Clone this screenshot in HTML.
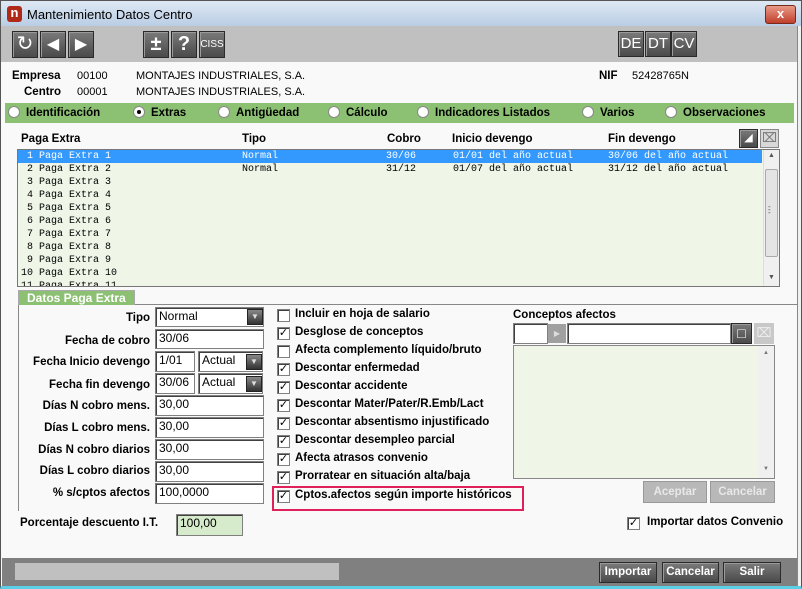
<!DOCTYPE html>
<html><head><meta charset="utf-8"><style>
*{margin:0;padding:0;box-sizing:border-box}
body{width:802px;height:589px;overflow:hidden;background:#f9f9f9;font-family:"Liberation Sans",sans-serif;font-size:12px;color:#000;position:relative}
.a{position:absolute}
.b{font-weight:bold;font-size:11.5px}
.btn{position:absolute;background:linear-gradient(#7a7a7a,#4a4a4a);border:1px solid #2a2a2a;box-shadow:inset 1px 1px 0 #9a9a9a;color:#fff;text-align:center}
.in{position:absolute;background:#fff;border:1px solid #808080;box-shadow:inset 1px 1px 0 #404040;font-size:12px;padding:1px 0 0 3px}
.lb{position:absolute;font-weight:bold;font-size:11.5px;text-align:right;width:150px;left:0}
.cb{position:absolute;width:13px;height:13px;border:1px solid #808080;background:#fff;box-shadow:inset 1px 1px 0 #404040;font-size:11px;line-height:11px;text-align:center}
.ct{position:absolute;font-weight:bold;font-size:11.5px;left:295px}
.mono{font-family:"Liberation Mono",monospace;font-size:10px;white-space:pre}
.rad{display:inline-block;width:12px;height:12px;border-radius:50%;background:#fff;border:1px solid #888;vertical-align:-2px;margin-right:6px;position:relative}
.dd{position:absolute;width:16px;height:16px;background:linear-gradient(#888,#333);border:1px solid #222;color:#ddd;font-size:8px;text-align:center;line-height:14px}
</style></head><body>
<div class="a" style="left:0;top:0;width:802px;height:589px;border:1px solid #555;border-bottom:3px solid #5ad0e8"></div>
<div class="a" style="left:1px;top:1px;width:800px;height:25px;background:linear-gradient(#dfe9f5,#b9cde4)"></div>
<div class="a" style="left:7px;top:6px;width:15px;height:16px;background:#b02818;border-radius:3px;color:#fff;font-weight:bold;font-size:13px;line-height:14px;text-align:center">n</div>
<div class="a" style="left:27px;top:7px;font-size:13px">Mantenimiento Datos Centro</div>
<div class="a" style="left:765px;top:5px;width:31px;height:19px;background:linear-gradient(#e89a88,#c0402a);border:1px solid #7a2a1a;border-radius:3px;color:#fff;font-weight:bold;text-align:center;line-height:16px;font-size:13px">x</div>
<div class="a" style="left:1px;top:26px;width:796px;height:36px;background:#c0c0c0"></div>
<div class="btn" style="left:12px;top:31px;width:26px;height:27px;font-size:20px;line-height:24px">&#x21BB;</div>
<div class="btn" style="left:40px;top:31px;width:26px;height:27px;font-size:16px;line-height:25px">&#9664;</div>
<div class="btn" style="left:68px;top:31px;width:26px;height:27px;font-size:16px;line-height:25px">&#9654;</div>
<div class="btn" style="left:143px;top:31px;width:26px;height:27px;font-size:20px;line-height:25px;font-weight:bold">±</div>
<div class="btn" style="left:171px;top:31px;width:26px;height:27px;font-size:20px;line-height:25px;font-weight:bold">?</div>
<div class="btn" style="left:199px;top:31px;width:26px;height:27px;font-size:10px;line-height:25px">CISS</div>
<div class="btn" style="left:618px;top:31px;width:26px;height:26px;font-size:15px;line-height:24px">DE</div>
<div class="btn" style="left:645px;top:31px;width:26px;height:26px;font-size:15px;line-height:24px">DT</div>
<div class="btn" style="left:671px;top:31px;width:26px;height:26px;font-size:15px;line-height:24px">CV</div>
<div class="a" style="left:797px;top:26px;width:4px;height:560px;background:#f0f0f0;border-left:1px solid #888"></div>
<div class="a b" style="left:12px;top:70px">Empresa</div>
<div class="a" style="left:77px;top:70px;font-size:11px">00100</div>
<div class="a" style="left:136px;top:70px;font-size:11px">MONTAJES INDUSTRIALES, S.A.</div>
<div class="a b" style="left:24px;top:86px">Centro</div>
<div class="a" style="left:77px;top:86px;font-size:11px">00001</div>
<div class="a" style="left:136px;top:86px;font-size:11px">MONTAJES INDUSTRIALES, S.A.</div>
<div class="a b" style="left:599px;top:70px">NIF</div>
<div class="a" style="left:632px;top:70px;font-size:11px">52428765N</div>
<div class="a b" style="left:5px;top:103px;width:789px;height:20px;background:#8cc072;line-height:20px;white-space:nowrap">
<span class="a" style="left:3px"><span class="rad"></span>Identificación</span>
<span class="a" style="left:128px"><span class="rad"><span class="a" style="left:3px;top:3px;width:4px;height:4px;background:#000;border-radius:50%"></span></span>Extras</span>
<span class="a" style="left:213px"><span class="rad"></span>Antigüedad</span>
<span class="a" style="left:323px"><span class="rad"></span>Cálculo</span>
<span class="a" style="left:412px"><span class="rad"></span>Indicadores Listados</span>
<span class="a" style="left:577px"><span class="rad"></span>Varios</span>
<span class="a" style="left:660px"><span class="rad"></span>Observaciones</span>
</div>
<div class="a b" style="left:21px;top:133px">Paga Extra</div>
<div class="a b" style="left:242px;top:133px">Tipo</div>
<div class="a b" style="left:387px;top:133px">Cobro</div>
<div class="a b" style="left:452px;top:133px">Inicio devengo</div>
<div class="a b" style="left:608px;top:133px">Fin devengo</div>
<div class="btn" style="left:739px;top:129px;width:19px;height:19px;font-size:11px;line-height:16px">&#9698;</div>
<div class="a" style="left:760px;top:129px;width:19px;height:19px;background:#d8d8d8;border:1px solid #888;color:#777;text-align:center;line-height:16px;font-size:13px">&#8999;</div>
<div class="a" style="left:17px;top:149px;width:763px;height:138px;background:#eff6e8;border:1px solid #777;overflow:hidden">
<div class="a" style="left:0;top:0;width:744px;height:13px;background:#3399ff"></div>
<div class="a mono" style="left:3px;top:0;line-height:13px"><span style="color:#fff"> 1 Paga Extra 1</span>
 2 Paga Extra 2
 3 Paga Extra 3
 4 Paga Extra 4
 5 Paga Extra 5
 6 Paga Extra 6
 7 Paga Extra 7
 8 Paga Extra 8
 9 Paga Extra 9
10 Paga Extra 10
11 Paga Extra 11</div>
<div class="a mono" style="left:224px;top:0;line-height:13px"><span style="color:#fff">Normal</span>
Normal</div>
<div class="a mono" style="left:368px;top:0;line-height:13px"><span style="color:#fff">30/06</span>
31/12</div>
<div class="a mono" style="left:435px;top:0;line-height:13px"><span style="color:#fff">01/01 del año actual</span>
01/07 del año actual</div>
<div class="a mono" style="left:590px;top:0;line-height:13px"><span style="color:#fff">30/06 del año actual</span>
31/12 del año actual</div>
<div class="a" style="left:745px;top:0;width:17px;height:136px;background:#f0f0f0;border-left:1px solid #ddd"></div>
<div class="a" style="left:747px;top:19px;width:13px;height:88px;background:#e4e4e4;border:1px solid #aaa;border-radius:2px"></div>
<div class="a" style="left:750px;top:2px;font-size:7px;color:#555">&#9650;</div>
<div class="a" style="left:750px;top:124px;font-size:7px;color:#555">&#9660;</div>
<div class="a" style="left:750px;top:55px;font-size:8px;color:#555;line-height:3px">-<br>-<br>-</div>
</div>
<div class="a b" style="left:18px;top:290px;width:117px;height:15px;background:#8cc072;color:#fff;line-height:14px;padding-left:8px;border:1px solid #aaa;border-bottom:none;font-size:12px">Datos Paga Extra</div>
<div class="a" style="left:135px;top:304px;width:663px;height:1px;background:#888"></div>
<div class="a" style="left:18px;top:305px;width:1px;height:206px;background:#888"></div>
<div class="lb" style="top:312px">Tipo</div>
<div class="in" style="left:155px;top:307px;width:109px;height:20px">Normal</div>
<div class="dd" style="left:247px;top:309px">&#9660;</div>
<div class="lb" style="top:335px">Fecha de cobro</div>
<div class="in" style="left:155px;top:329px;width:109px;height:20px">30/06</div>
<div class="lb" style="top:356px">Fecha Inicio devengo</div>
<div class="in" style="left:155px;top:351px;width:40px;height:21px">1/01</div>
<div class="in" style="left:198px;top:351px;width:65px;height:21px">Actual</div>
<div class="dd" style="left:246px;top:354px">&#9660;</div>
<div class="lb" style="top:379px">Fecha fin devengo</div>
<div class="in" style="left:155px;top:373px;width:40px;height:21px">30/06</div>
<div class="in" style="left:198px;top:373px;width:65px;height:21px">Actual</div>
<div class="dd" style="left:246px;top:376px">&#9660;</div>
<div class="lb" style="top:400px">Días N cobro mens.</div>
<div class="in" style="left:155px;top:395px;width:109px;height:21px">30,00</div>
<div class="lb" style="top:422px">Días L cobro mens.</div>
<div class="in" style="left:155px;top:417px;width:109px;height:21px">30,00</div>
<div class="lb" style="top:444px">Días N cobro diarios</div>
<div class="in" style="left:155px;top:439px;width:109px;height:21px">30,00</div>
<div class="lb" style="top:465px">Días L cobro diarios</div>
<div class="in" style="left:155px;top:461px;width:109px;height:21px">30,00</div>
<div class="lb" style="top:487px">% s/cptos afectos</div>
<div class="in" style="left:155px;top:483px;width:109px;height:21px">100,0000</div>
<div class="cb" style="left:277px;top:309px"></div><div class="ct" style="top:308px">Incluir en hoja de salario</div>
<div class="cb" style="left:277px;top:327px">✓</div><div class="ct" style="top:326px">Desglose de conceptos</div>
<div class="cb" style="left:277px;top:345px"></div><div class="ct" style="top:344px">Afecta complemento líquido/bruto</div>
<div class="cb" style="left:277px;top:363px">✓</div><div class="ct" style="top:362px">Descontar enfermedad</div>
<div class="cb" style="left:277px;top:381px">✓</div><div class="ct" style="top:380px">Descontar accidente</div>
<div class="cb" style="left:277px;top:399px">✓</div><div class="ct" style="top:398px;width:203px;overflow:hidden;white-space:nowrap">Descontar Mater/Pater/R.Emb/Lact</div>
<div class="cb" style="left:277px;top:417px">✓</div><div class="ct" style="top:416px">Descontar absentismo injustificado</div>
<div class="cb" style="left:277px;top:435px">✓</div><div class="ct" style="top:434px">Descontar desempleo parcial</div>
<div class="cb" style="left:277px;top:453px">✓</div><div class="ct" style="top:452px">Afecta atrasos convenio</div>
<div class="cb" style="left:277px;top:471px">✓</div><div class="ct" style="top:470px">Prorratear en situación alta/baja</div>
<div class="a" style="left:272px;top:486px;width:252px;height:25px;border:2px solid #e0205a"></div>
<div class="cb" style="left:277px;top:490px">✓</div><div class="ct" style="top:489px">Cptos.afectos según importe históricos</div>
<div class="a b" style="left:513px;top:309px">Conceptos afectos</div>
<div class="in" style="left:513px;top:323px;width:35px;height:21px"></div>
<div class="a" style="left:548px;top:324px;width:18px;height:19px;background:#a0a0a0;color:#ddd;font-size:8px;text-align:center;line-height:19px">&#9654;</div>
<div class="in" style="left:567px;top:323px;width:164px;height:21px"></div>
<div class="btn" style="left:731px;top:323px;width:21px;height:21px;font-size:14px;line-height:18px">&#9633;</div>
<div class="a" style="left:754px;top:323px;width:20px;height:21px;background:#c8c8c8;color:#eee;text-align:center;font-size:13px;line-height:19px">&#8999;</div>
<div class="a" style="left:513px;top:345px;width:262px;height:134px;background:#eff6e8;border:1px solid #888"></div>
<div class="a" style="left:758px;top:346px;width:16px;height:132px;background:#f0f0f0"></div>
<div class="a" style="left:763px;top:350px;font-size:6px;color:#777">&#9650;</div>
<div class="a" style="left:763px;top:466px;font-size:6px;color:#777">&#9660;</div>
<div class="a b" style="left:643px;top:481px;width:64px;height:22px;background:#b8b8b8;border:1px solid #999;color:#e8e8e8;text-align:center;line-height:20px">Aceptar</div>
<div class="a b" style="left:710px;top:481px;width:65px;height:22px;background:#b8b8b8;border:1px solid #999;color:#e8e8e8;text-align:center;line-height:20px">Cancelar</div>
<div class="a b" style="left:20px;top:517px">Porcentaje descuento I.T.</div>
<div class="in" style="left:176px;top:514px;width:67px;height:22px;background:#d5ebcb">100,00</div>
<div class="cb" style="left:627px;top:517px">✓</div>
<div class="a b" style="left:647px;top:516px">Importar datos Convenio</div>
<div class="a" style="left:2px;top:558px;width:795px;height:28px;background:#808080"></div>
<div class="a" style="left:15px;top:563px;width:324px;height:17px;background:#c0c0c0"></div>
<div class="btn b" style="left:599px;top:562px;width:58px;height:21px;line-height:19px">Importar</div>
<div class="btn b" style="left:662px;top:562px;width:57px;height:21px;line-height:19px">Cancelar</div>
<div class="btn b" style="left:723px;top:562px;width:58px;height:21px;line-height:19px">Salir</div>
</body></html>
